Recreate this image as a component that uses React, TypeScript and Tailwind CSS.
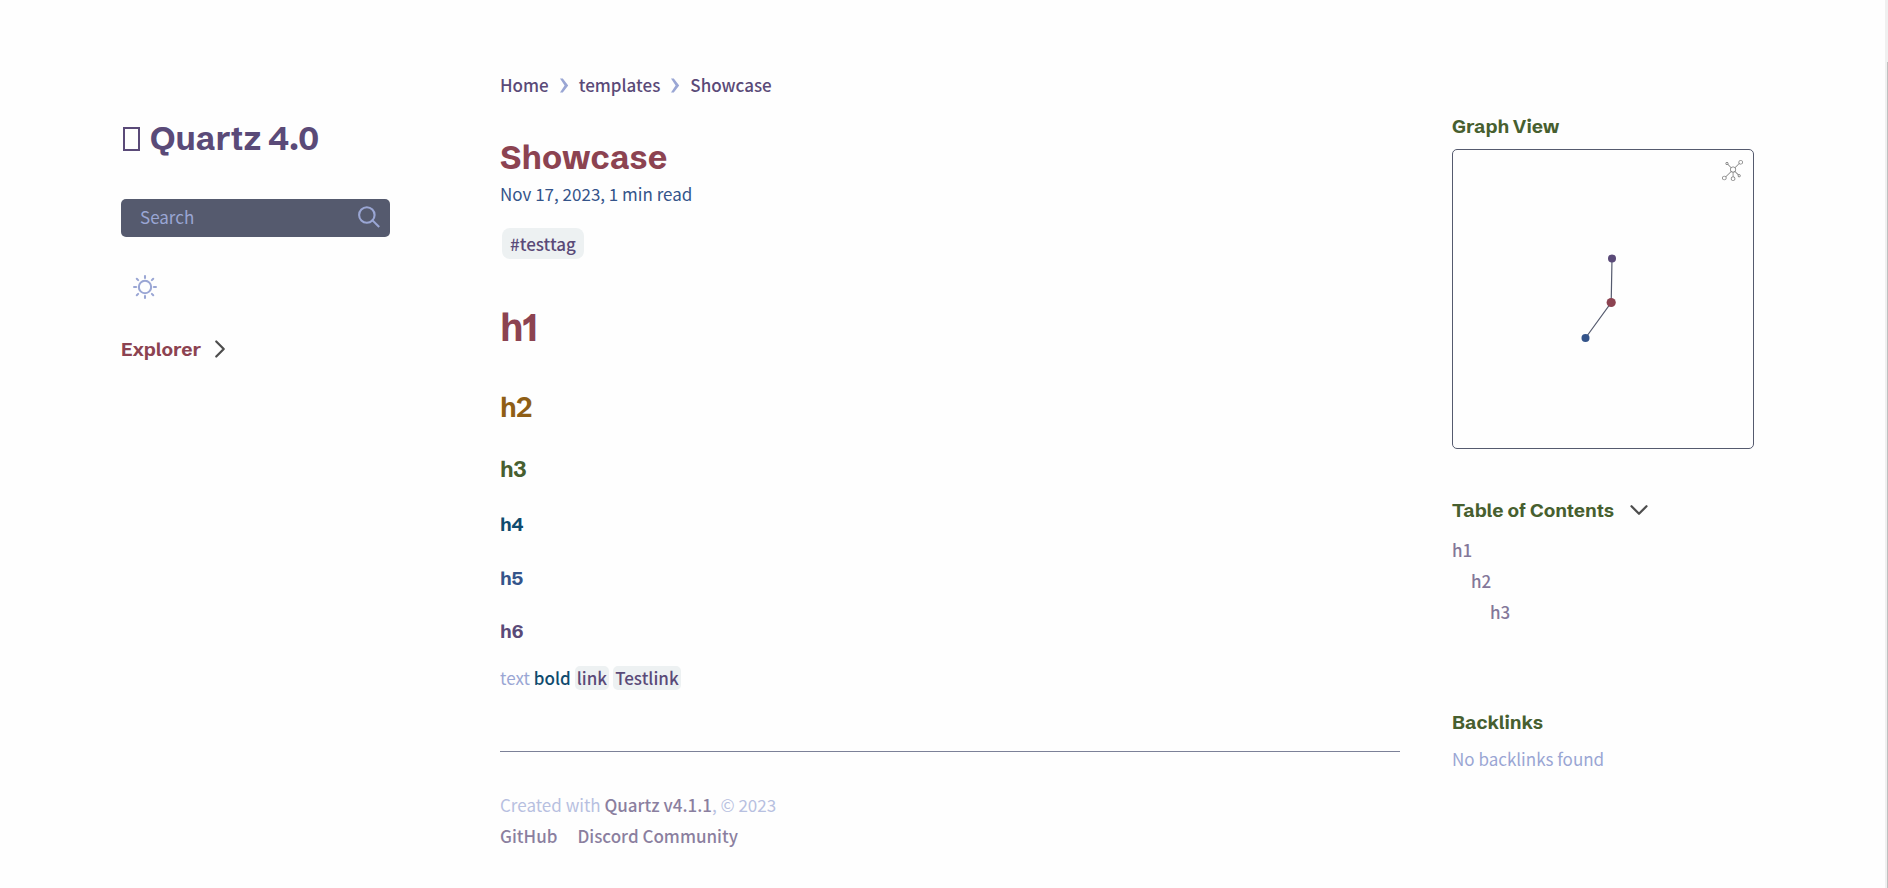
import type { ReactNode } from "react";

const BODY = "font-['Noto_Sans_CJK_SC',sans-serif]";
const HEAD = "font-['Schibsted_Grotesk',Inter,sans-serif]";

function SectionTitle({ children }: { children: ReactNode }) {
  return <h3 className={`${HEAD} text-[19px] leading-6 font-bold text-[#475f2f]`}>{children}</h3>;
}

function SunIcon() {
  return (
    <svg viewBox="0 0 35 35" className="size-6" fill="none" stroke="#9aa6d4" strokeWidth="3" strokeLinecap="round" aria-hidden="true">
      <circle cx="17.5" cy="17.5" r="9" />
      <path d="M1.5 17.5h3M30.5 17.5h3M17.5 1.5v3M17.5 30.5v3M5.5 5.5l2 2M27.5 27.5l2 2M5.5 29.5l2-2M27.5 7.5l2-2" />
    </svg>
  );
}

function SearchIcon() {
  return (
    <svg viewBox="0 0 19.9 19.7" className="size-[22px]" fill="none" stroke="#9aa6d4" strokeWidth="1.9" aria-hidden="true">
      <path d="M18.5 18.3l-5.4-5.4" strokeLinecap="square" />
      <circle cx="8" cy="8" r="7" />
    </svg>
  );
}

function Chevron({ className }: { className: string }) {
  return (
    <svg viewBox="0 0 24 24" className={className} fill="none" stroke="#4e4e4e" strokeWidth="1.8" strokeLinecap="round" strokeLinejoin="round" aria-hidden="true">
      <path d="M6 9l6 6 6-6" />
    </svg>
  );
}

function GlobalGraphIcon() {
  return (
    <svg viewBox="0 0 55 55" className="size-[21px]" fill="#7d7d7d" aria-hidden="true">
      <path d="M49,0c-3.309,0-6,2.691-6,6c0,1.035,0.263,2.009,0.726,2.86l-9.829,9.829C32.542,17.634,30.846,17,29,17s-3.542,0.634-4.898,1.688l-7.669-7.669C16.785,10.424,17,9.74,17,9c0-2.206-1.794-4-4-4S9,6.794,9,9s1.794,4,4,4c0.74,0,1.424-0.215,2.019-0.567l7.669,7.669C21.634,21.458,21,23.154,21,25s0.634,3.542,1.688,4.897L10.024,42.562C8.958,41.595,7.549,41,6,41c-3.309,0-6,2.691-6,6s2.691,6,6,6s6-2.691,6-6c0-1.035-0.263-2.009-0.726-2.86l12.829-12.829c1.106,0.86,2.44,1.436,3.898,1.619v10.16c-2.833,0.478-5,2.942-5,5.91c0,3.309,2.691,6,6,6s6-2.691,6-6c0-2.967-2.167-5.431-5-5.91v-10.16c1.458-0.183,2.792-0.759,3.898-1.619l7.669,7.669C41.215,39.576,41,40.26,41,41c0,2.206,1.794,4,4,4s4-1.794,4-4s-1.794-4-4-4c-0.74,0-1.424,0.215-2.019,0.567l-7.669-7.669C36.366,28.542,37,26.846,37,25s-0.634-3.542-1.688-4.897l9.665-9.665C46.042,11.405,47.451,12,49,12c3.309,0,6-2.691,6-6S52.309,0,49,0z M11,9c0-1.103,0.897-2,2-2s2,0.897,2,2s-0.897,2-2,2S11,10.103,11,9z M6,51c-2.206,0-4-1.794-4-4s1.794-4,4-4s4,1.794,4,4S8.206,51,6,51z M33,49c0,2.206-1.794,4-4,4s-4-1.794-4-4s1.794-4,4-4S33,46.794,33,49z M29,31c-3.309,0-6-2.691-6-6s2.691-6,6-6s6,2.691,6,6S32.309,31,29,31z M47,41c0,1.103-0.897,2-2,2s-2-0.897-2-2s0.897-2,2-2S47,39.897,47,41z M49,10c-2.206,0-4-1.794-4-4s1.794-4,4-4s4,1.794,4,4S51.206,10,49,10z" />
    </svg>
  );
}

function LeftSidebar() {
  return (
    <aside className="w-[269px] shrink-0 pt-[118px]">
      <h1 className={`${HEAD} text-[33px] leading-[42px] font-bold text-[#5a4a78]`}>
        <a href="#" className="flex items-center gap-2.5">
          <span className="ml-0.5 h-6 w-[17px] border-2 border-[#5a4a78]" aria-hidden="true" />
          Quartz 4.0
        </a>
      </h1>
      <form className="mt-[39px] flex h-[38px] items-center rounded-[5px] bg-[#555a6e] pr-2.5 pb-0.5 pl-[19px]">
        <input
          type="text"
          aria-label="Search"
          placeholder="Search"
          className="h-9 min-w-0 flex-1 bg-transparent pb-0.5 text-[17px] text-[#9aa6d4] outline-none placeholder:text-[#9aa6d4]"
        />
        <button type="button" aria-label="Run search">
          <SearchIcon />
        </button>
      </form>
      <button type="button" aria-label="Toggle dark mode" className="mt-[38px] ml-3 block">
        <SunIcon />
      </button>
      <button type="button" className={`${HEAD} mt-[38px] flex items-center gap-1 text-[19px] leading-6 font-bold text-[#8c4351]`}>
        Explorer
        <Chevron className="-my-1 size-[30px] -rotate-90" />
      </button>
    </aside>
  );
}

function CrumbArrow() {
  return (
    <svg viewBox="0 0 10 15" className="h-[15px] w-2.5" fill="#9aa6d4" aria-hidden="true">
      <path d="M1 0.500H3.800L9.200 7.500L3.800 14.500H1L5.600 7.500Z" />
    </svg>
  );
}

function Crumbs() {
  return (
    <nav aria-label="Breadcrumb" className="flex items-center gap-2.5 text-[17px] leading-[30px] font-medium text-[#5a4a78]">
      <a href="#">Home</a>
      <CrumbArrow />
      <a href="#">templates</a>
      <CrumbArrow />
      <a href="#">Showcase</a>
    </nav>
  );
}

function Article() {
  return (
    <main className="min-w-0 flex-1 pt-[70px] text-[17px]">
      <Crumbs />
      <h1 className={`${HEAD} mt-[37px] text-[33px] leading-[42px] font-bold text-[#8c4351]`}>Showcase</h1>
      <p className="leading-[30px] text-[#34548a]">Nov 17, 2023, 1 min read</p>
      <ul className="mt-[19px] flex">
        <li>
          <a href="#" className="ml-0.5 block rounded-lg bg-[#edf1f2] px-2 leading-[31px] font-medium text-[#5a4a78]">#testtag</a>
        </li>
      </ul>
      <h1 className={`${HEAD} mt-[46px] text-[38px] leading-[46px] font-bold text-[#8c4351]`}>h1</h1>
      <h2 className={`${HEAD} mt-[39px] text-[27px] leading-9 font-bold text-[#8f5e15]`}>h2</h2>
      <h3 className={`${HEAD} mt-[30px] text-[22px] leading-7 font-bold text-[#475f2f]`}>h3</h3>
      <h4 className={`${HEAD} mt-[26px] text-[19px] leading-7 font-bold text-[#0f4b6e]`}>h4</h4>
      <h5 className={`${HEAD} mt-[26px] text-[19px] leading-7 font-bold text-[#34548a]`}>h5</h5>
      <h6 className={`${HEAD} mt-[25px] text-[19px] leading-7 font-bold text-[#5a4a78]`}>h6</h6>
      <p className="mt-[18px] flex gap-1 leading-[30px] text-[#9aa6d4]">
        text <strong className="font-medium text-[#0f4b6e]">bold</strong>
        <a href="#" className="my-[3px] rounded-[5px] bg-[#edf1f2] px-0.5 leading-6 font-medium text-[#5a4a78]">link</a>
        <a href="#" className="my-[3px] rounded-[5px] bg-[#edf1f2] px-0.5 leading-6 font-medium text-[#5a4a78]">Testlink</a>
      </p>
      <hr className="mt-[58px] border-[#7c8198]" />
      <footer className="mt-[37px] leading-[31px] text-[#9aa6d4] opacity-70">
        <p>
          Created with <a href="#" className="font-medium text-[#5a4a78]">Quartz v4.1.1</a>, © 2023
        </p>
        <ul className="flex gap-5 font-medium text-[#5a4a78]">
          <li><a href="#">GitHub</a></li>
          <li><a href="#">Discord Community</a></li>
        </ul>
      </footer>
    </main>
  );
}

function RightSidebar() {
  return (
    <aside className="w-[302px] shrink-0 pt-[114px] text-[17px]">
      <SectionTitle>Graph View</SectionTitle>
      <div className="relative mt-[11px] h-[300px] rounded-[5px] border border-[#555a6e]">
        <svg viewBox="0 0 300 298" className="size-full" role="img" aria-label="Graph of linked notes">
          <path d="M159 108.500L158.200 152.500L132.500 188" fill="none" stroke="#555a6e" strokeWidth="1.2" />
          <circle cx="159" cy="108.500" r="4" fill="#5a4a78" />
          <circle cx="158.200" cy="152.500" r="4.600" fill="#8c4351" />
          <circle cx="132.500" cy="188" r="4" fill="#34548a" />
        </svg>
        <button type="button" aria-label="Global graph" className="absolute top-2.5 right-2.5">
          <GlobalGraphIcon />
        </button>
      </div>
      <button type="button" className="mt-[49px] flex items-center gap-2.5">
        <SectionTitle>Table of Contents</SectionTitle>
        <Chevron className="-my-1 size-[30px]" />
      </button>
      <ul className="mt-3 leading-[31px] font-medium text-[#5a4a78] opacity-75">
        <li><a href="#">h1</a></li>
        <li className="pl-[19px]"><a href="#">h2</a></li>
        <li className="pl-[38px]"><a href="#">h3</a></li>
      </ul>
      <div className="mt-[83px]">
        <SectionTitle>Backlinks</SectionTitle>
        <p className="mt-2.5 leading-[30px] text-[#9aa6d4]">No backlinks found</p>
      </div>
    </aside>
  );
}

export default function App() {
  return (
    <div className={`${BODY} flex min-h-screen bg-[#fefefe]`}>
      <div className="flex min-w-0 flex-1 pr-[131px] pl-[121px]">
        <LeftSidebar />
        <div className="w-[110px] shrink-0" />
        <Article />
        <div className="w-[52px] shrink-0" />
        <RightSidebar />
      </div>
      <div className="flex w-[3px] justify-end bg-[#f0f0f0] pt-[62px]" aria-hidden="true">
        <div className="w-px bg-[#c0c0c0]" />
      </div>
    </div>
  );
}
